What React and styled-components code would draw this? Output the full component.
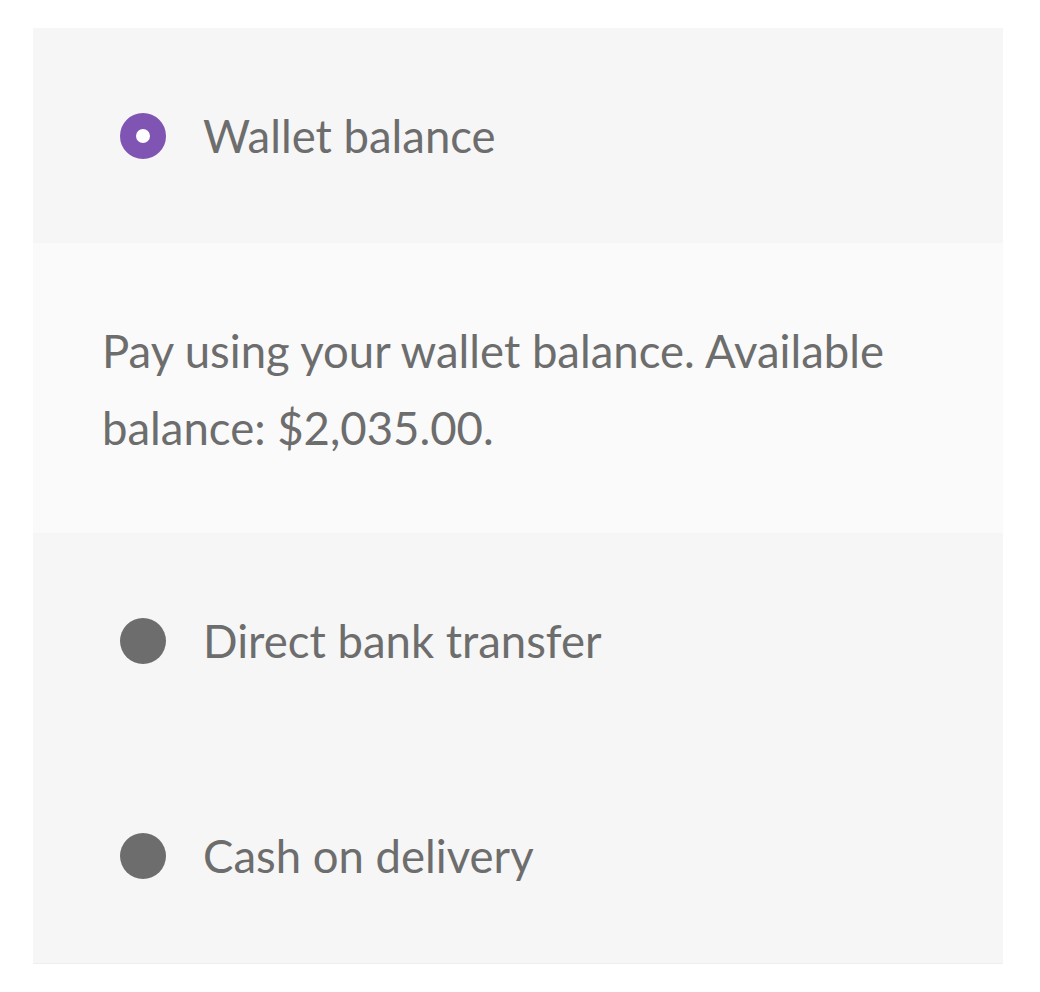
import React, { useState } from "react";
import styled, { createGlobalStyle } from "styled-components";

const GlobalStyle = createGlobalStyle`
  body {
    margin: 0;
    background: #ffffff;
    font-family: "Lato", "Open Sans", sans-serif;
  }
`;

const Page = styled.div`
  padding: 28px 37px 30px 33px;
`;

const Methods = styled.ul`
  list-style: none;
  margin: 0;
  padding: 0;
  background: #f6f6f6;
  border-bottom: 1px solid #eeeeee;
`;

const Method = styled.li`
  margin: 0;
`;

const Label = styled.label`
  display: flex;
  align-items: center;
  gap: 37px;
  height: 215px;
  padding-left: 87px;
  box-sizing: border-box;
  color: #6d6d6d;
  font-size: 45.5px;
  cursor: pointer;
`;

const Radio = styled.span`
  width: 46px;
  height: 46px;
  border-radius: 50%;
  flex: 0 0 auto;
  box-sizing: border-box;
  background: ${(p) => (p.checked ? "#ffffff" : "#6d6d6d")};
  border: ${(p) => (p.checked ? "16px solid #7f54b3" : "none")};
`;

const Description = styled.div`
  background: #fafafa;
  padding: 69px 69px 67px;
  color: #6d6d6d;
  font-size: 45.5px;
  line-height: 77px;
`;

const methods = [
  {
    id: "wallet",
    title: "Wallet balance",
    description: "Pay using your wallet balance. Available balance: $2,035.00.",
  },
  { id: "bacs", title: "Direct bank transfer" },
  { id: "cod", title: "Cash on delivery" },
];

export default function App() {
  const [selected, setSelected] = useState("wallet");
  return (
    <>
      <GlobalStyle />
      <Page>
        <Methods>
          {methods.map((m) => (
            <Method key={m.id}>
              <Label onClick={() => setSelected(m.id)}>
                <Radio checked={selected === m.id} />
                {m.title}
              </Label>
              {selected === m.id && m.description && (
                <Description>{m.description}</Description>
              )}
            </Method>
          ))}
        </Methods>
      </Page>
    </>
  );
}
